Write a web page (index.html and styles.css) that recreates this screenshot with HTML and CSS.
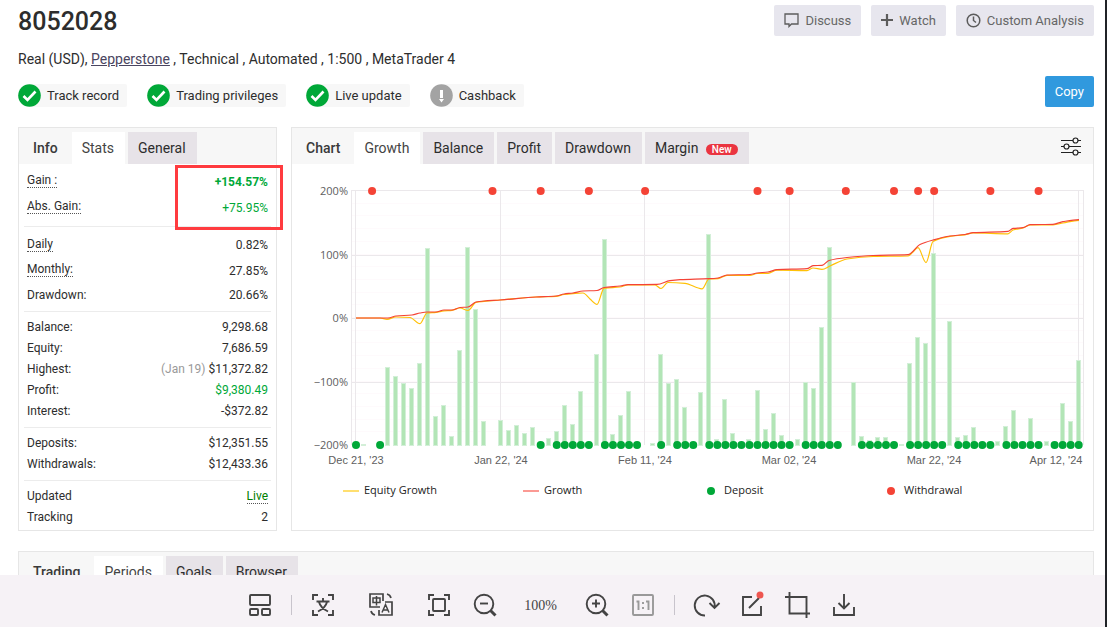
FILE: index.html
```
<!DOCTYPE html>
<html lang="en">
<head>
  <meta charset="UTF-8">
  <meta name="viewport" content="width=device-width, initial-scale=1.0">
  <title>8052028</title>
  <link rel="stylesheet" href="styles.css">
</head>
<body>
  <main class="page">
    <!-- Account header -->
    <header class="header">
      <div class="header-info">
        <h1>8052028</h1>
        <p class="account">Real (USD), <a href="#">Pepperstone</a> , Technical , Automated , 1:500 , MetaTrader 4</p>
        <ul class="badges">
          <li class="badge">
            <svg width="23" height="23" viewBox="0 0 23 23"><circle cx="11.5" cy="11.5" r="11.3" fill="#00a838"/><path d="M5.5 12l4 4 8-8.500" fill="none" stroke="#fff" stroke-width="2.600"/></svg>
            Track record
          </li>
          <li class="badge">
            <svg width="23" height="23" viewBox="0 0 23 23"><circle cx="11.5" cy="11.5" r="11.3" fill="#00a838"/><path d="M5.5 12l4 4 8-8.500" fill="none" stroke="#fff" stroke-width="2.600"/></svg>
            Trading privileges
          </li>
          <li class="badge">
            <svg width="23" height="23" viewBox="0 0 23 23"><circle cx="11.5" cy="11.5" r="11.3" fill="#00a838"/><path d="M5.5 12l4 4 8-8.500" fill="none" stroke="#fff" stroke-width="2.600"/></svg>
            Live update
          </li>
          <li class="badge">
            <svg width="23" height="23" viewBox="0 0 23 23"><circle cx="11.5" cy="11.5" r="11.3" fill="#a3a3a3"/><path d="M10 6h3v8h-3zM9 15h5l-2.500 3.500z" fill="#fff"/></svg>
            Cashback
          </li>
        </ul>
      </div>
      <div class="header-actions">
        <div class="actions-row">
          <button class="btn" type="button">
            <svg width="15" height="15" viewBox="0 0 15 15" fill="none" stroke="#5c5c5c" stroke-width="1.300"><path d="M1 1h13v10H7.500l-2.500 2.500V11H1z"/></svg>
            Discuss
          </button>
          <button class="btn" type="button">
            <svg width="12" height="13" viewBox="0 0 12 13" stroke="#5c5c5c" stroke-width="2.200"><path d="M6 0v12M0 6h12"/></svg>
            Watch
          </button>
          <button class="btn" type="button">
            <svg width="15" height="15" viewBox="0 0 15 15" fill="none" stroke="#5c5c5c" stroke-width="1.500"><circle cx="7.500" cy="7.500" r="6.300"/><path d="M7.500 3.500v4l2.500 2"/></svg>
            Custom Analysis
          </button>
        </div>
        <button class="btn btn-copy" type="button">Copy</button>
      </div>
    </header>

    <div class="columns">
      <!-- Stats -->
      <section class="card stats">
        <nav class="tabs">
          <h2>Info</h2>
          <button class="tab active" type="button">Stats</button>
          <button class="tab" type="button">General</button>
        </nav>
        <table class="stats-table">
          <tbody class="loose gains">
            <tr><th scope="row"><span class="hint">Gain :</span></th><td class="low green bold">+154.57%</td></tr>
            <tr><th scope="row"><span class="hint">Abs. Gain:</span></th><td class="low green">+75.95%</td></tr>
          </tbody>
          <tbody class="loose">
            <tr><th scope="row"><span class="hint">Daily</span></th><td class="low">0.82%</td></tr>
            <tr><th scope="row"><span class="hint">Monthly:</span></th><td class="low">27.85%</td></tr>
            <tr><th scope="row">Drawdown:</th><td>20.66%</td></tr>
          </tbody>
          <tbody>
            <tr><th scope="row">Balance:</th><td>9,298.68</td></tr>
            <tr><th scope="row">Equity:</th><td>7,686.59</td></tr>
            <tr><th scope="row">Highest:</th><td><span class="muted">(Jan 19)</span> $11,372.82</td></tr>
            <tr><th scope="row">Profit:</th><td class="green">$9,380.49</td></tr>
            <tr><th scope="row">Interest:</th><td>-$372.82</td></tr>
          </tbody>
          <tbody>
            <tr><th scope="row">Deposits:</th><td>$12,351.55</td></tr>
            <tr><th scope="row">Withdrawals:</th><td>$12,433.36</td></tr>
          </tbody>
          <tbody>
            <tr><th scope="row">Updated</th><td><span class="hint live">Live</span></td></tr>
            <tr><th scope="row">Tracking</th><td>2</td></tr>
          </tbody>
        </table>
        <div class="marker"></div>
      </section>

      <!-- Growth chart -->
      <section class="card chart">
        <nav class="tabs">
          <h2>Chart</h2>
          <button class="tab active" type="button">Growth</button>
          <button class="tab" type="button">Balance</button>
          <button class="tab" type="button">Profit</button>
          <button class="tab" type="button">Drawdown</button>
          <button class="tab" type="button">Margin <span class="new">New</span></button>
          <button class="settings" type="button" aria-label="Chart settings">
            <svg width="20" height="20" viewBox="0 0 20 20" fill="#f7f7f7" stroke="#222" stroke-width="1.200"><path d="M0 4.500h20M0 10.500h20M0 16.500h20"/><circle cx="14.500" cy="4.500" r="2.500"/><circle cx="5.500" cy="10.500" r="2.500"/><circle cx="14.500" cy="16.500" r="2.500"/></svg>
          </button>
        </nav>
        <svg class="plot" viewBox="292 164 801 366">
          <g id="grid"></g>
          <g id="bars"></g>
          <path id="equity" class="line equity"/>
          <path id="growth" class="line growth"/>
          <g id="dots"></g>
          <g class="axis-y">
            <text x="348" y="195">200%</text>
            <text x="348" y="259">100%</text>
            <text x="348" y="322">0%</text>
            <text x="348" y="386">−100%</text>
            <text x="348" y="449">−200%</text>
          </g>
          <g class="axis-x">
            <text x="356" y="464">Dec 21, '23</text>
            <text x="501" y="464">Jan 22, '24</text>
            <text x="645" y="464">Feb 11, '24</text>
            <text x="789" y="464">Mar 02, '24</text>
            <text x="934" y="464">Mar 22, '24</text>
            <text x="1056" y="464">Apr 12, '24</text>
          </g>
          <g class="legend">
            <path d="M343 491h16" stroke="#ffdf70" stroke-width="2"/>
            <text x="364" y="494">Equity Growth</text>
            <path d="M523 491h16" stroke="#fb9a94" stroke-width="2"/>
            <text x="544" y="494">Growth</text>
            <circle cx="711" cy="491" r="4" fill="#00a838"/>
            <text x="724" y="494">Deposit</text>
            <circle cx="891" cy="491" r="4" fill="#f44336"/>
            <text x="904" y="494">Withdrawal</text>
          </g>
        </svg>
      </section>
    </div>

    <section class="card trading">
      <nav class="tabs">
        <h2>Trading</h2>
        <button class="tab active" type="button">Periods</button>
        <button class="tab" type="button">Goals</button>
        <button class="tab" type="button">Browser</button>
      </nav>
    </section>
  </main>

  <!-- Viewer toolbar -->
  <footer class="toolbar">
    <button type="button" aria-label="Layout">
      <svg viewBox="0 0 24 24"><rect x="2" y="2" width="20" height="10" rx="1"/><rect x="2" y="16" width="8" height="6" rx="1"/><rect x="14" y="16" width="8" height="6" rx="1"/></svg>
    </button>
    <span class="sep"></span>
    <div class="group wide">
      <button type="button" aria-label="Recognize text">
        <svg viewBox="0 0 24 24"><path d="M2 7V2h5M17 2h5v5M22 17v5h-5M7 22H2v-5M12 5v3M5.500 8.500h13M8 9c1 4 4 7 9 9.500M16 9c-1 4-4 7-9 9.500"/></svg>
      </button>
      <button type="button" aria-label="Translate">
        <svg viewBox="0 0 24 24"><g stroke-width="1.700"><path d="M11 14H1V1h13v7M10 17v5h13V9h-7"/><path d="M18 1c2 .500 3.500 2 4 4M2 18c.500 2 2 3.500 4 4"/><path d="M4 5h7v4.500H4zM7.500 3v9.500M13 19.500l3.500-8 3.500 8M14 17h5" stroke-width="1.500"/></g></svg>
      </button>
      <button type="button" aria-label="Fit to window">
        <svg viewBox="0 0 24 24"><path d="M2 7V2h5M17 2h5v5M22 17v5h-5M7 22H2v-5"/><rect x="6" y="6" width="12" height="12" rx="1"/></svg>
      </button>
    </div>
    <div class="group zoom">
      <button type="button" aria-label="Zoom out">
        <svg viewBox="0 0 24 24"><circle cx="11" cy="11" r="9.300"/><path d="M7 10.500h8"/><path d="M17.500 17.500l5 5" stroke-width="3"/></svg>
      </button>
      <span class="percent">100%</span>
      <button type="button" aria-label="Zoom in">
        <svg viewBox="0 0 24 24"><circle cx="11" cy="11" r="9.300"/><path d="M7 10.500h8M11 6.500v8"/><path d="M17.500 17.500l5 5" stroke-width="3"/></svg>
      </button>
      <button type="button" class="disabled" aria-label="Actual size">
        <svg viewBox="0 0 24 24"><rect x="2" y="2" width="20" height="20" rx="1"/><path d="M5.500 8.500H7.500V17M15 8.500h2.500V17M12 9v2M12 14v2"/></svg>
      </button>
    </div>
    <span class="sep"></span>
    <div class="group">
      <button type="button" aria-label="Rotate">
        <svg viewBox="0 0 24 24"><path d="M11 22.500A10 10 0 1 1 20.500 14.500M15.500 10l5 5 5-5"/></svg>
      </button>
      <button type="button" aria-label="Edit">
        <svg viewBox="0 0 24 24"><path d="M12 4H3v18h18v-9M9 15L19 5"/><circle cx="20" cy="2" r="3.500" fill="#ee5650" stroke="none"/></svg>
      </button>
      <button type="button" aria-label="Crop">
        <svg viewBox="0 0 24 24"><path d="M3.500-1v21.500H24M-1 4h21.500v21"/></svg>
      </button>
      <button type="button" aria-label="Save">
        <svg viewBox="0 0 24 24"><path d="M2 14v8h20v-8M12 1v14M6.500 10l5.500 5.500 5.500-5.500"/></svg>
      </button>
    </div>
  </footer>
  <script src="script.js"></script>
</body>
</html>
```
FILE: styles.css
```
* {
  box-sizing: border-box;
}
body {
  display: flex;
  flex-direction: column;
  height: 100vh;
  margin: 0;
  overflow: hidden;
  border-right: 2px solid #202327;
  font-family: Roboto, Arial, sans-serif;
  font-size: 12px;
  color: #2d2d2d;
  background-color: #fff;
}
button {
  border: none;
  margin: 0;
  font-family: inherit;
  cursor: pointer;
}
h1, h2, p, ul {
  margin: 0;
  padding: 0;
}
.page {
  flex: 1;
  min-height: 0;
  overflow: hidden;
  padding: 5px 11px 0 18px;
}

/* header */
.header {
  display: flex;
  justify-content: space-between;
  margin-bottom: 20px;
}
h1 {
  font-size: 25px;
  line-height: 34px;
  font-weight: 500;
}
.account {
  margin-top: 10px;
  font-size: 14px;
  line-height: 20px;
}
.account a {
  color: #4a4560;
}
.badges {
  display: flex;
  gap: 20px;
  margin-top: 15px;
  list-style: none;
}
.badge {
  display: flex;
  align-items: center;
  gap: 6px;
  height: 23px;
  padding-right: 8px;
  border-radius: 12px 2px 2px 12px;
  font-size: 13px;
  background-color: #f7f7f7;
}
.header-actions {
  display: flex;
  flex-direction: column;
  align-items: flex-end;
  justify-content: space-between;
}
.actions-row {
  display: flex;
  gap: 10px;
}
.btn {
  display: flex;
  align-items: center;
  gap: 6px;
  height: 31px;
  padding: 0 10px;
  border-radius: 2px;
  font-size: 13px;
  color: #666;
  background-color: #e7e6ee;
}
.btn-copy {
  color: #fff;
  background-color: #3099de;
}

/* cards and tabs */
.columns {
  display: flex;
  gap: 14px;
  margin-bottom: 20px;
}
.card {
  border: 1px solid #e6e6e6;
}
.stats {
  position: relative;
  width: 259px;
}
.chart {
  flex: 1;
}
.trading {
  height: 200px;
}
.tabs {
  display: flex;
  align-items: flex-end;
  gap: 3px;
  height: 36px;
  background-color: #f7f7f7;
}
.tabs h2 {
  padding: 0 11px 0 14px;
  font-size: 14px;
  line-height: 32px;
  font-weight: 500;
  color: #3a3a3a;
}
.tab {
  height: 32px;
  padding: 0 11px 0 10px;
  font-size: 14px;
  color: #2d2d2d;
  background-color: #e7e3e8;
}
.tab.active {
  color: #444;
  background-color: #fff;
}
.new {
  margin-left: 4px;
  padding: 0 6px;
  border-radius: 6px;
  font-size: 10px;
  font-weight: 500;
  color: #fff;
  background-color: #ea3440;
}
.settings {
  align-self: center;
  height: 20px;
  margin-left: auto;
  margin-right: 12px;
  padding: 0;
  background: none;
}

/* stats */
.stats-table {
  width: calc(100% - 10px);
  margin: 3px 5px 0;
  border-spacing: 0;
}
.stats-table th, .stats-table td {
  height: 21px;
  padding: 0 3px;
  line-height: 14px;
  font-weight: 400;
}
.stats-table th {
  text-align: left;
}
.stats-table td {
  text-align: right;
}
.stats-table .loose th, .stats-table .loose td {
  height: 26px;
}
.stats-table .loose .low {
  padding-top: 3px;
}
.stats-table tbody::after {
  content: "";
  display: table-row;
  height: 6px;
}
.stats-table .loose::after {
  height: 3px;
}
.stats-table .gains::after {
  height: 7px;
}
.stats-table tbody:last-child::after {
  display: none;
}
.stats-table tbody + tbody tr:first-child > * {
  height: 26px;
  padding-top: 4px;
  border-top: 1px solid #ececec;
}
.stats-table .loose + .loose tr:first-child > * {
  height: 30px;
}
.stats-table .loose + .loose tr:first-child > .low {
  padding-top: 7px;
}
.stats-table td.bold {
  font-weight: 700;
}
.green {
  color: #00a838;
}
.muted {
  color: #999;
}
.hint {
  border-bottom: 1px dotted #555;
}
.live {
  color: #008000;
}
.marker {
  position: absolute;
  top: 37px;
  right: -7px;
  width: 108px;
  height: 65px;
  border: 3px solid #ff3b3f;
}

/* plot */
.plot {
  display: block;
  width: 100%;
}
.plot text {
  font-size: 11px;
}
.line {
  fill: none;
  stroke-width: 1.2;
}
.equity {
  stroke: #ffc107;
}
.growth {
  stroke: #f44336;
}
.bar {
  fill: #b2e5b6;
  stroke: #d3efd8;
}
.deposit {
  fill: #00a838;
}
.withdrawal {
  fill: #f44336;
}
.minor {
  stroke: #fefafc;
}
.major {
  fill: none;
  stroke: #ebe8eb;
}
.axis-y {
  font-family: "Open Sans", sans-serif;
  text-anchor: end;
  fill: #606060;
}
.axis-x {
  font-family: "Liberation Sans", sans-serif;
  text-anchor: middle;
  fill: #606060;
}
.legend {
  font-family: "Open Sans", sans-serif;
  fill: #222;
}

/* toolbar */
.toolbar {
  display: flex;
  align-items: center;
  justify-content: center;
  height: 52px;
  padding: 8px 2px 0 0;
  background-color: #f6f2f6;
}
.toolbar button {
  width: 24px;
  height: 24px;
  padding: 0;
  background: none;
}
.toolbar svg {
  display: block;
  width: 24px;
  height: 24px;
  overflow: visible;
  fill: none;
  stroke: #444;
  stroke-width: 1.9;
}
.toolbar .disabled svg {
  stroke: #999;
}
.group {
  display: flex;
  align-items: center;
  gap: 22px;
}
.wide {
  gap: 34px;
}
.zoom {
  margin-left: 22px;
}
.sep {
  width: 1px;
  height: 20px;
  margin: 0 19px;
  background-color: #c8c4cc;
}
.percent {
  width: 44px;
  padding-top: 2px;
  font-family: "Liberation Serif", serif;
  font-size: 14px;
  text-align: center;
  color: #444;
}
```
FILE: script.js
```
const SVG = 'http://www.w3.org/2000/svg';
const LEFT = 356;
const STEP = 8.03;
const BOTTOM = 445;

// [day index, bar height]
const bars = [
  [1, 1], [4, 78], [5, 69], [6, 62], [7, 57], [8, 82], [9, 197], [10, 29], [11, 40], [12, 9],
  [13, 95], [14, 198], [15, 136], [16, 24], [18, 25], [19, 15], [20, 20], [21, 12], [22, 18],
  [24, 7], [25, 14], [26, 40], [27, 21], [28, 54], [30, 91], [31, 206], [32, 11], [33, 30],
  [34, 54], [37, 2], [38, 91], [39, 62], [40, 66], [41, 38], [43, 53], [44, 211], [45, 6],
  [46, 46], [47, 12], [49, 6], [50, 55], [51, 16], [52, 32], [53, 10], [55, 6], [56, 63],
  [57, 57], [58, 118], [59, 198], [62, 63], [63, 9], [64, 5], [65, 8], [66, 8], [68, 1],
  [69, 82], [70, 108], [71, 102], [72, 192], [74, 124], [75, 8], [76, 10], [77, 18], [80, 4],
  [81, 19], [82, 35], [84, 27], [86, 4], [88, 42], [89, 24], [90, 85]
];

// first and last day of each run of deposits
const deposits = [[0, 0], [3, 3], [23, 23], [25, 29], [31, 35], [38, 38], [40, 42], [44, 54],
  [56, 60], [63, 67], [69, 73], [75, 79], [81, 85], [87, 90]];
const withdrawals = [2, 17, 23, 29, 36, 50, 54, 61, 67, 70, 72, 79, 85];

const growth = [
  [356, 318], [388, 318], [396, 316], [412, 315], [420, 313], [427, 312], [436, 312], [444, 310],
  [452, 310], [460, 307.5], [468, 307], [476, 302], [484, 301], [500, 300], [536, 297], [556, 296],
  [564, 294], [573, 293], [583, 291], [597, 290.5], [604, 287.5], [620, 286], [628, 284.7],
  [657, 284.4], [670, 280.7], [680, 279.7], [709, 278.7], [718, 278], [727, 275], [750, 274.5],
  [757, 273], [768, 272], [777, 269.7], [807, 268.7], [813, 265.7], [822, 265.3], [829, 260.5],
  [847, 257.5], [873, 255.5], [908, 254.7], [920, 244.5], [933, 240], [950, 236], [965, 234.5],
  [973, 232.7], [1008, 231.4], [1013, 228.4], [1023, 227.7], [1030, 224.7], [1053, 224.3],
  [1063, 221.7], [1079, 219.7]
];
const equity = [
  [356, 318], [380, 318], [387, 319.3], [396, 317], [410, 317.5], [420, 323.7], [427, 313],
  [436, 312.3], [444, 310.8], [452, 310.3], [460, 308], [468, 310.5], [476, 302.3], [484, 301.4],
  [500, 300], [536, 297], [556, 296.3], [564, 294.5], [573, 293.6], [583, 293], [590, 299],
  [597, 304.4], [604, 288.3], [620, 287], [628, 285], [655, 285], [661, 288.5], [668, 282.5],
  [685, 283.3], [702, 288.8], [709, 279], [718, 278.6], [727, 275.4], [750, 275.5], [757, 273.5],
  [768, 273.3], [777, 270.2], [807, 270.6], [813, 268], [822, 269.4], [830, 266], [847, 259],
  [873, 256.5], [908, 256], [913, 252], [918, 247.7], [926, 262.6], [933, 241.5], [950, 236.3],
  [965, 234.8], [973, 233], [1008, 233.8], [1013, 230], [1023, 228], [1030, 225], [1053, 224.8],
  [1063, 223], [1079, 220.3]
];

function add(parentId, tag, attrs) {
  const el = document.createElementNS(SVG, tag);
  for (const key in attrs) {
    el.setAttribute(key, attrs[key]);
  }
  document.getElementById(parentId).appendChild(el);
}

// Smooth path with flat tangents where the direction changes
function smooth(points) {
  const slope = points.map((p, i) => {
    if (i === 0 || i === points.length - 1) return 0;
    const a = (p[1] - points[i - 1][1]) / (p[0] - points[i - 1][0]);
    const b = (points[i + 1][1] - p[1]) / (points[i + 1][0] - p[0]);
    return a * b <= 0 ? 0 : 2 * a * b / (a + b);
  });
  let d = `M${points[0]}`;
  for (let i = 1; i < points.length; i++) {
    const [x0, y0] = points[i - 1];
    const [x1, y1] = points[i];
    const h = (x1 - x0) / 3;
    d += `C${x0 + h} ${y0 + h * slope[i - 1]} ${x1 - h} ${y1 - h * slope[i]} ${x1} ${y1}`;
  }
  return d;
}

// Grid
for (let i = 1; i < 20; i++) {
  const y = Math.round(191 + i * 12.7) - 0.5;
  add('grid', 'path', { class: 'minor', d: `M352 ${y}H1083` });
}
[190.5, 255.5, 318.5, 382.5].forEach(y => add('grid', 'path', { class: 'major', d: `M351 ${y}H1083` }));
[351.5, 355.5, 500.5, 644.5, 789.5, 933.5, 1078.5, 1083.5].forEach(x => {
  add('grid', 'path', { class: 'major', d: `M${x} 190V445` });
});

bars.forEach(([day, height]) => {
  const x = Math.round(LEFT + day * STEP) - 2.5;
  add('bars', 'rect', { class: 'bar', x: x, y: BOTTOM - height + 0.5, width: 4, height: height });
});

document.getElementById('equity').setAttribute('d', smooth(equity));
document.getElementById('growth').setAttribute('d', smooth(growth));

deposits.forEach(([from, to]) => {
  for (let day = from; day <= to; day++) {
    add('dots', 'circle', { class: 'deposit', cx: LEFT + day * STEP, cy: BOTTOM, r: 4 });
  }
});
withdrawals.forEach(day => {
  add('dots', 'circle', { class: 'withdrawal', cx: LEFT + day * STEP, cy: 191, r: 4 });
});
```
